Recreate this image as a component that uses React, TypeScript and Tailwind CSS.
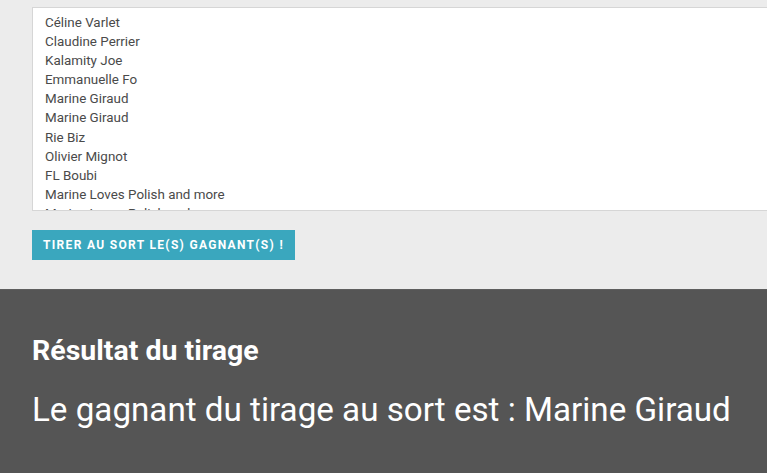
import React from "react";

const names = [
  "Céline Varlet",
  "Claudine Perrier",
  "Kalamity Joe",
  "Emmanuelle Fo",
  "Marine Giraud",
  "Marine Giraud",
  "Rie Biz",
  "Olivier Mignot",
  "FL Boubi",
  "Marine Loves Polish and more",
  "Marine Loves Polish and more",
  "Sophie Martin",
];

export default function App() {
  return (
    <div
      className="w-[767px] h-[473px] overflow-hidden bg-[#ececec] flex flex-col"
      style={{ fontFamily: "Roboto, 'Noto Sans', sans-serif" }}
    >
      <div className="pl-[32px] pt-[7px] h-[289px] flex flex-col">
        <div className="w-[800px] h-[204px] bg-white border border-[#d6d6d6] overflow-hidden pl-[12px] pt-[5px]">
          {names.map((n, i) => (
            <div key={i} className="text-[13.4px] leading-[19.1px] text-[#4a4a4a]">
              {n}
            </div>
          ))}
        </div>
        <div className="mt-[19px]">
          <button className="h-[30px] w-[263px] bg-[#3aa7be] text-white text-[12px] font-bold uppercase tracking-[0.11em] flex items-center justify-center whitespace-nowrap">
            Tirer au sort le(s) gagnant(s) !
          </button>
        </div>
      </div>
      <div className="flex-1 bg-[#555555] border-t border-[#5e5e5e] pl-[32px] pt-[45px]">
        <h2 className="text-white text-[28.5px] font-bold leading-[32px]">Résultat du tirage</h2>
        <p className="text-white text-[33.2px] leading-[40px] mt-[23px] whitespace-nowrap">
          Le gagnant du tirage au sort est : Marine Giraud
        </p>
      </div>
    </div>
  );
}
